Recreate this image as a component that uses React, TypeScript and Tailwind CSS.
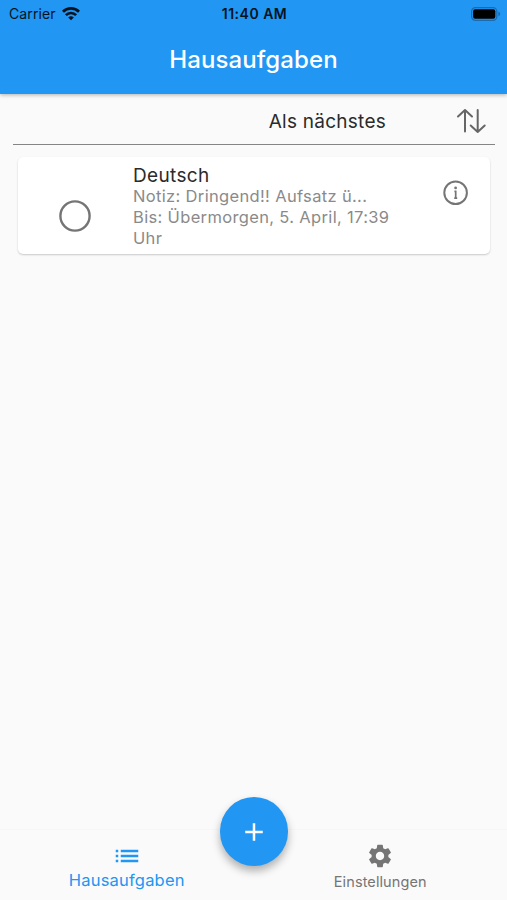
import type { ReactNode } from 'react'
import { MdAdd, MdList, MdSettings } from 'react-icons/md'

interface Homework {
  subject: string
  note: string
  due: string
}

const HOMEWORK: Homework[] = [
  {
    subject: 'Deutsch',
    note: 'Notiz: Dringend!! Aufsatz ü...',
    due: 'Bis: Übermorgen, 5. April, 17:39 Uhr',
  },
]

function WifiIcon() {
  return (
    <svg width="18" height="14" viewBox="0 0 18 14" fill="none" stroke="#06131f" strokeWidth="2.7">
      <path d="M1 4.700a11.300 11.300 0 0 1 16 0" />
      <path d="M3.900 8.100a7.200 7.200 0 0 1 10.200 0" />
      <path d="M9 13.300 6.200 10.500a4 4 0 0 1 5.600 0z" fill="#06131f" stroke="none" />
    </svg>
  )
}

function BatteryIcon() {
  return (
    <svg width="30" height="14" viewBox="0 0 30 14">
      <rect x="0.6" y="0.6" width="25.2" height="12.8" rx="3.8" fill="none" stroke="#1a6bb0" strokeWidth="1.2" />
      <rect x="2.1" y="2.3" width="22.2" height="9.4" rx="2" fill="#000" />
      <path d="M27.400 4.800c2.400.600 2.400 3.800 0 4.400z" fill="#1a6bb0" />
    </svg>
  )
}

function SortIcon() {
  return (
    <svg width="32" height="26" viewBox="0 0 32 26" fill="none" stroke="#666" strokeWidth="2" strokeLinecap="round" strokeLinejoin="round">
      <path d="M9 23.500V2M2 8.500L9 2l7 6.500" />
      <path d="M21.700 2v22M14.700 17.500l7 6.500 7-6.500" />
    </svg>
  )
}

function InfoIcon() {
  return (
    <svg width="26" height="26" viewBox="0 0 26 26" fill="none" stroke="#757575">
      <circle cx="12.600" cy="12.700" r="11.300" strokeWidth="2" />
      <circle cx="12.600" cy="7.900" r="1.400" fill="#757575" stroke="none" />
      <path d="M11.400 11.300H12.700V18M11.200 18.200H14.200" strokeWidth="1.700" />
    </svg>
  )
}

function StatusBar() {
  return (
    <div className="grid h-[27px] grid-cols-3 items-center pl-[9px] pr-[6px] text-[14px] text-[#06131f]">
      <div className="flex items-center gap-[6px]">
        <span className="tracking-[0.1px]">Carrier</span>
        <WifiIcon />
      </div>
      <span className="pr-px text-center text-[14px] font-semibold tracking-[0.5px]">11:40 AM</span>
      <div className="flex justify-end">
        <BatteryIcon />
      </div>
    </div>
  )
}

function HomeworkCard({ subject, note, due }: Homework) {
  return (
    <div className="ml-[18px] mr-[17px] mt-3 flex h-[97px] rounded-[5px] bg-white shadow-[0_1px_2px_rgba(0,0,0,0.2)]">
      <div className="flex w-[114px] items-center justify-center pt-[20px]">
        <svg width="32" height="32" viewBox="0 0 32 32" fill="none" stroke="#757575" strokeWidth="2.400">
          <circle cx="16" cy="16" r="14.600" />
        </svg>
      </div>
      <div className="ml-px w-[264px] pt-2 text-[16.5px] leading-[21px] tracking-[0.34px] text-[#8a8a8a]">
        <h2 className="text-[19px] leading-[21px] tracking-[0.35px] text-[#2b2b2b]">{subject}</h2>
        <p className="truncate">{note}</p>
        <p>{due}</p>
      </div>
      <button className="ml-[46px] mt-[23px] h-[26px] w-[26px]">
        <InfoIcon />
      </button>
    </div>
  )
}

function NavItem({ icon, label, active }: { icon: ReactNode; label: string; active?: boolean }) {
  return (
    <button
      className={`flex w-1/2 flex-col items-center ${
        active
          ? 'pt-[11px] text-[16.5px] leading-[18px] tracking-[0.2px] text-[#2196f3]'
          : 'pt-[12px] text-[14.5px] leading-6 tracking-[0.1px] text-[#757575]'
      }`}
    >
      {icon}
      <span>{label}</span>
    </button>
  )
}

export default function App() {
  return (
    <div className="flex h-[900px] w-[507px] flex-col overflow-hidden bg-[#fafafa] font-['Inter',sans-serif]">
      <header className="h-[94px] shrink-0 bg-[#2196f3] shadow-[0_1px_4px_rgba(0,0,0,0.3)]">
        <StatusBar />
        <h1 className="mt-[15px] text-center text-[24px] font-medium leading-[36px] tracking-[0.12px] text-white">
          Hausaufgaben
        </h1>
      </header>

      <main className="flex-1">
        {/* Sort order */}
        <div className="ml-[13px] mr-[12px] flex h-[51px] items-center justify-end border-b border-[#858585] pr-[7px] pt-[3px]">
          <span className="pt-[3px] text-[19px] tracking-[0.25px] text-[#2b2b2b]">Als nächstes</span>
          <button className="ml-[70px]">
            <SortIcon />
          </button>
        </div>

        {HOMEWORK.map((item) => (
          <HomeworkCard key={item.subject} {...item} />
        ))}
      </main>

      <nav className="relative flex h-[71px] shrink-0 border-t border-[#f6f6f6]">
        <NavItem active icon={<MdList size={30} />} label="Hausaufgaben" />
        <NavItem icon={<MdSettings size={28} />} label="Einstellungen" />
        <button className="absolute -top-[33px] left-[220px] flex h-[69px] w-[68px] items-center justify-center rounded-full bg-[#2196f3] text-white shadow-[0_5px_8px_rgba(0,0,0,0.3)]">
          <MdAdd size={30} />
        </button>
      </nav>
    </div>
  )
}
